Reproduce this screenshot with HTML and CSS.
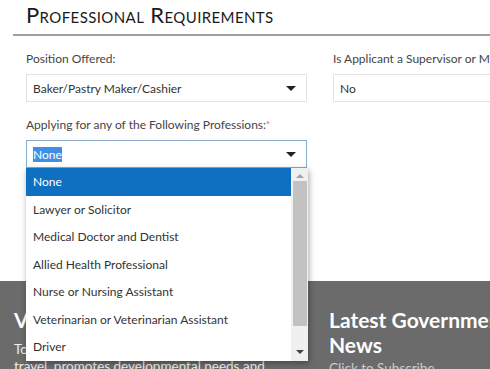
FILE: index.html
```html
<!DOCTYPE html>
<html lang="en">

<head>
    <meta charset="UTF-8">
    <meta name="viewport" content="width=device-width, initial-scale=1.0">
    <title>Professional Requirements</title>
    <link rel="stylesheet" href="styles.css">
</head>

<body>

    <div class="form-area">
        <h2 class="section-title">Professional Requirements</h2>

        <div class="row">
            <div class="field">
                <label>Position Offered:</label>
                <div class="select">
                    <span>Baker/Pastry Maker/Cashier</span>
                    <span class="caret"></span>
                </div>
            </div>
            <div class="field">
                <label>Is Applicant a Supervisor or Manager?</label>
                <div class="select">
                    <span>No</span>
                </div>
            </div>
        </div>

        <div class="row">
            <div class="field dropdown">
                <label>Applying for any of the Following Professions:<span class="req">*</span></label>
                <div class="select focused">
                    <span class="selected-text">None</span>
                    <span class="caret"></span>
                </div>

                <!-- open list of the select -->
                <div class="options">
                    <ul>
                        <li class="active">None</li>
                        <li>Lawyer or Solicitor</li>
                        <li>Medical Doctor and Dentist</li>
                        <li>Allied Health Professional</li>
                        <li>Nurse or Nursing Assistant</li>
                        <li>Veterinarian or Veterinarian Assistant</li>
                        <li>Driver</li>
                    </ul>
                    <div class="scrollbar">
                        <span class="arrow up"></span>
                        <span class="thumb"></span>
                        <span class="arrow down"></span>
                    </div>
                </div>
            </div>
        </div>
    </div>

    <footer class="site-footer">
        <div class="footer-col">
            <h3>Visit</h3>
            <p>To plan a visit, read about our entry rules,<br>travel, promotes developmental needs and<br>more.</p>
        </div>
        <div class="footer-col">
            <h3 class="wide">Latest Government News</h3>
            <p class="faint">Click to Subscribe</p>
        </div>
    </footer>

</body>

</html>
```

FILE: styles.css
```css
body {
    font-family: Lato, "Open Sans", sans-serif;
    margin: 0;
    padding: 0;
    background-color: #fff;
    color: #444;
    overflow: hidden;
}

.form-area {
    margin-left: 13px;
    height: 281px;
}

.section-title {
    font-variant: small-caps;
    font-weight: 400;
    font-size: 22px;
    letter-spacing: 0.4px;
    color: #1a1a1a;
    margin: 0;
    padding: 0 0 4px 13px;
    line-height: 30px;
    border-bottom: 2px solid #9e9e9e;
}

.row {
    display: grid;
    grid-template-columns: 281px 200px;
    column-gap: 26px;
    padding-left: 13px;
}

.field {
    padding-top: 14px;
}

.field label {
    display: block;
    font-size: 12px;
    line-height: 18px;
    margin-bottom: 6px;
    white-space: nowrap;
}

.req {
    color: #b55;
    font-size: 9px;
    vertical-align: top;
}

.select {
    height: 26px;
    border: 1px solid #e2e2e2;
    display: flex;
    align-items: center;
    justify-content: space-between;
    padding: 0 10px 0 6px;
    font-size: 12px;
    color: #333;
}

.select.focused {
    border-color: #8aa9cc;
}

.selected-text {
    background-color: #3f8fe6;
    color: #fff;
}

.caret {
    width: 0;
    height: 0;
    border-left: 5px solid transparent;
    border-right: 5px solid transparent;
    border-top: 5px solid #222;
}

.dropdown {
    position: relative;
}

.options {
    position: absolute;
    left: 0;
    top: 100%;
    width: 282px;
    height: 193px;
    display: flex;
    background-color: #fff;
    box-shadow: 1px 2px 6px rgba(0, 0, 0, 0.35);
    z-index: 2;
}

.options ul {
    list-style: none;
    margin: 0;
    padding: 0;
    flex: 1;
}

.options li {
    height: 27.5px;
    line-height: 27.5px;
    padding-left: 7px;
    font-size: 12px;
    color: #333;
}

.options li.active {
    background-color: #0f6fc0;
    color: #fff;
}

.scrollbar {
    width: 17px;
    background-color: #f0f0f0;
    display: flex;
    flex-direction: column;
    align-items: center;
}

.scrollbar .thumb {
    width: 14px;
    flex: 1;
    background-color: #c2c2c2;
    margin: 3px 0 24px;
}

.arrow {
    width: 0;
    height: 0;
    border-left: 4px solid transparent;
    border-right: 4px solid transparent;
    margin: 6px 0 0;
}

.arrow.up {
    border-bottom: 4px solid #a3a3a3;
}

.arrow.down {
    border-top: 4px solid #444;
    margin: 0 0 7px;
}

.site-footer {
    background-color: #6b6b6b;
    color: #fff;
    height: 100px;
    display: grid;
    grid-template-columns: 315px 1fr;
    padding-left: 14px;
}

.footer-col h3 {
    font-size: 21px;
    font-weight: 700;
    line-height: 25px;
    margin: 26px 0 9px;
}

.footer-col h3.wide {
    width: 200px;
    margin-bottom: 3px;
}

.footer-col p {
    font-size: 13.5px;
    margin: 0;
    line-height: 17px;
    color: #eee;
    white-space: nowrap;
}

.footer-col p.faint {
    color: #ccc;
}
```
